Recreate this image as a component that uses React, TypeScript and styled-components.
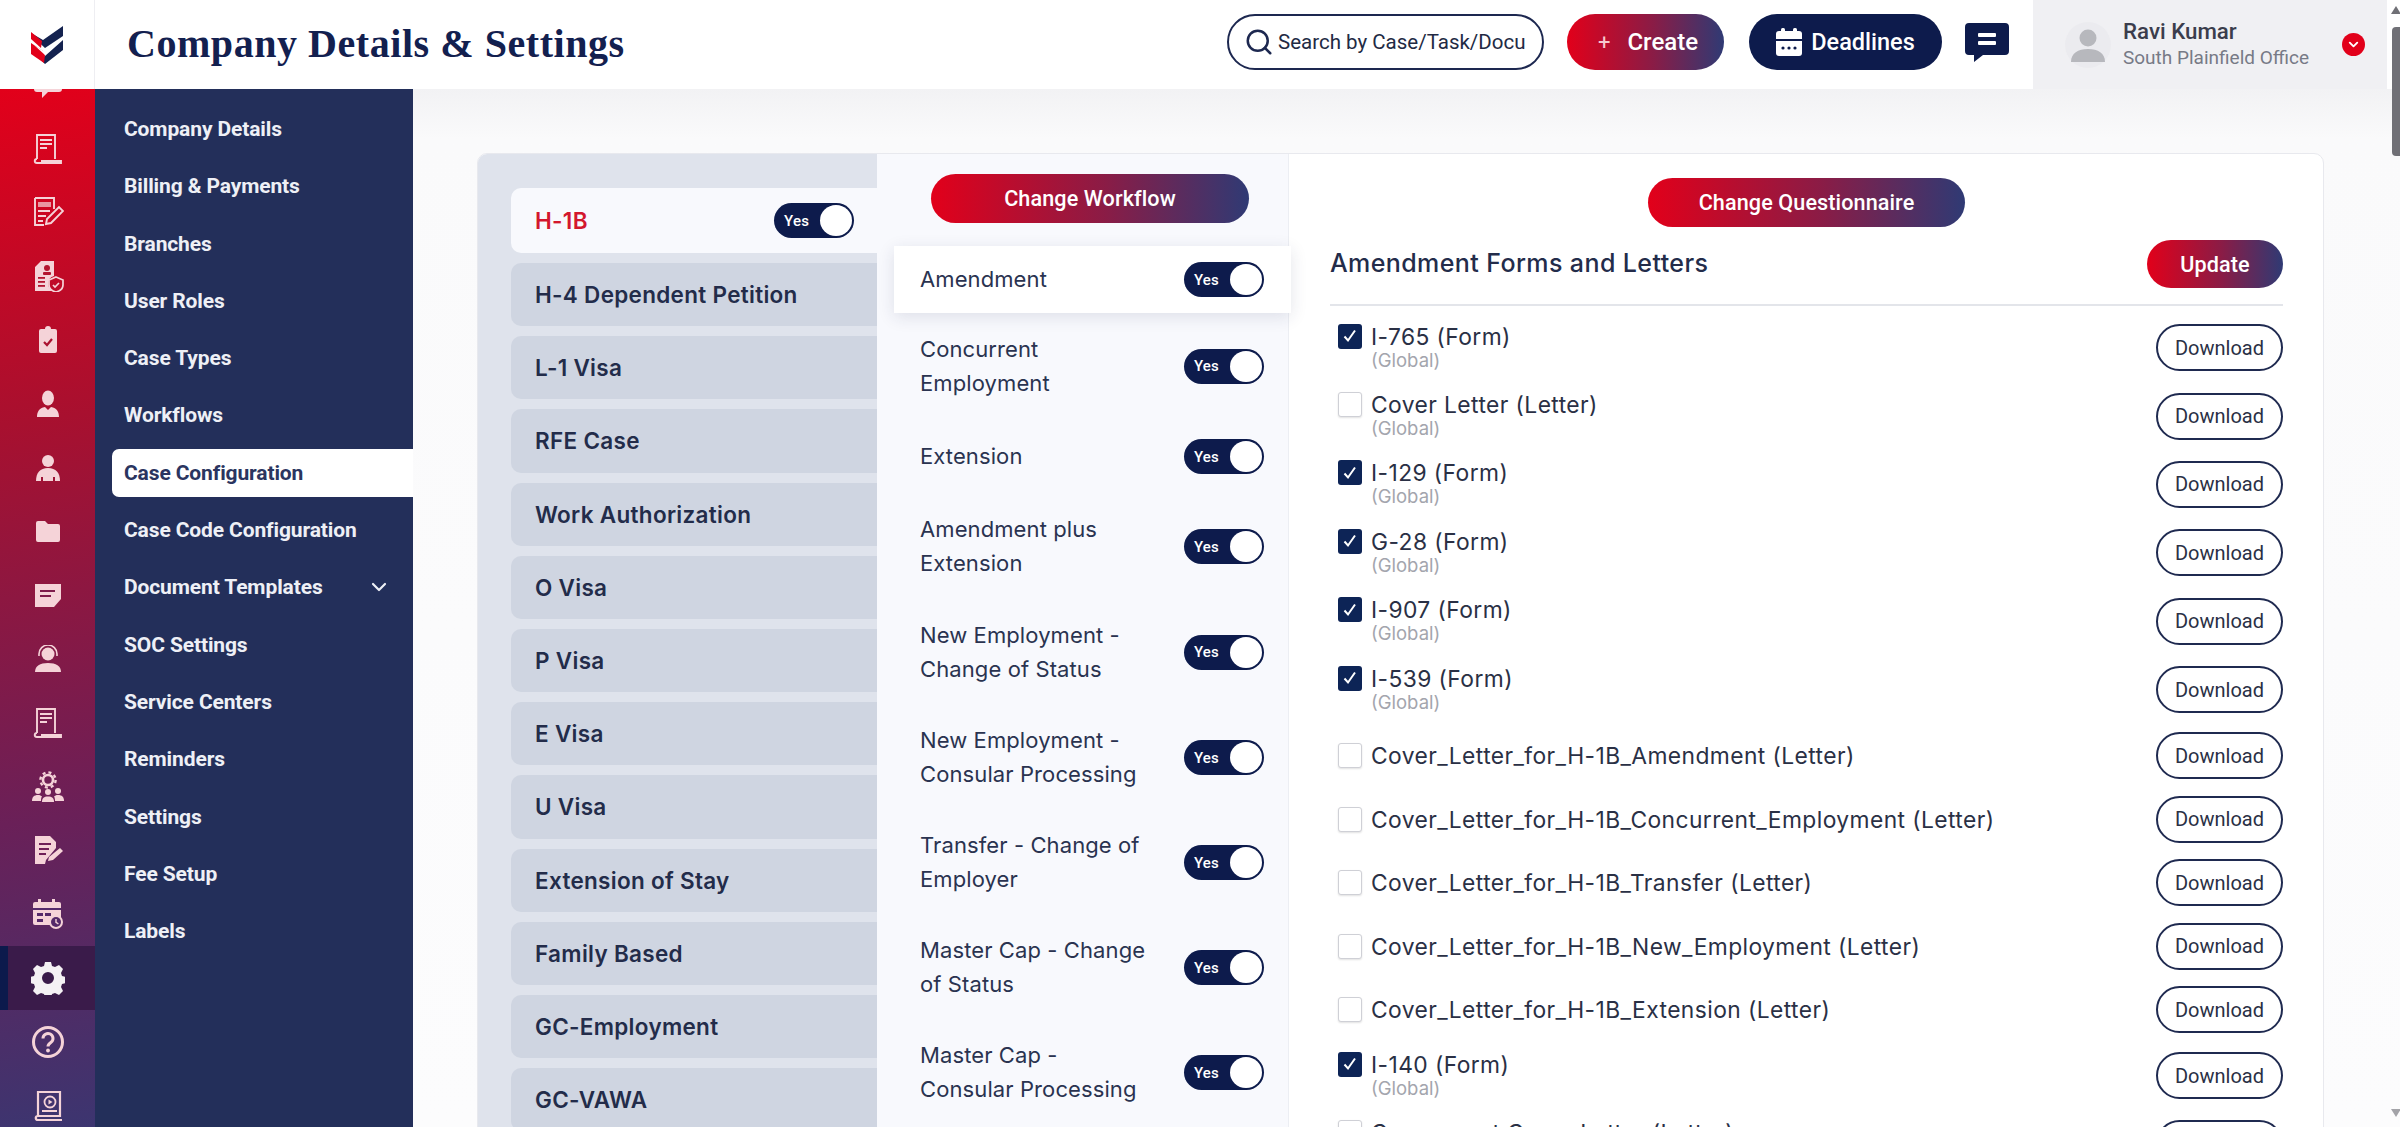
import React from "react";
import styled, { createGlobalStyle } from "styled-components";
import { Search, ChevronDown } from "lucide-react";

const Global = createGlobalStyle`
  html, body { margin: 0; padding: 0; overflow: hidden; background: #fff; }
  * { box-sizing: border-box; }
`;

const NAVY = "#0d1b4c";
const GRAD = "linear-gradient(90deg,#e2001a 0%,#8a1c46 55%,#2f3a74 100%)";
const BODY_FONT = `Inter, "Noto Sans", sans-serif`;
const UI_FONT = `Roboto, "Liberation Sans", sans-serif`;

const Page = styled.div`
  position: relative;
  width: 2400px;
  height: 1127px;
  overflow: hidden;
  display: flex;
  flex-direction: column;
  font-family: ${BODY_FONT};
`;
const Header = styled.header`
  height: 89px;
  flex: none;
  display: flex;
  align-items: center;
  background: #fff;
`;
const LogoCell = styled.div`
  width: 95px;
  height: 100%;
  flex: none;
  display: flex;
  align-items: center;
  justify-content: center;
  border-right: 1px solid #eeeef2;
`;
const Title = styled.h1`
  margin: 0 0 3px 32px;
  font: 700 40px "Liberation Serif", serif;
  letter-spacing: 0.55px;
  color: #13204f;
  white-space: nowrap;
`;
const Actions = styled.div`
  margin-left: auto;
  height: 100%;
  display: flex;
  align-items: center;
`;
const ActionGroup = styled.div`
  height: 100%;
  padding-bottom: 5px;
  display: flex;
  align-items: center;
`;
const SearchBox = styled.div`
  width: 317px;
  height: 56px;
  border: 2px solid #1d2850;
  border-radius: 28px;
  display: flex;
  align-items: center;
  gap: 4px;
  padding: 0 12px 0 15px;
  color: #1d2850;
  background: #fff;
`;
const SearchText = styled.span`
  font: 400 20.5px ${UI_FONT};
  white-space: nowrap;
  overflow: hidden;
  color: #222a44;
`;
const CreateButton = styled.button`
  width: 157px;
  height: 56px;
  margin-left: 23px;
  border: none;
  border-radius: 28px;
  background: ${GRAD};
  color: #fff;
  font: 500 24px ${UI_FONT};
  display: flex;
  align-items: center;
  justify-content: center;
  gap: 17px;
  padding-left: 11px;
`;
const PlusMark = styled.span`
  font: 400 22px ${UI_FONT};
  color: #f6c9cf;
`;
const DeadlineButton = styled.button`
  width: 193px;
  height: 56px;
  margin-left: 25px;
  border: none;
  border-radius: 28px;
  background: ${NAVY};
  color: #fff;
  font: 500 23.5px ${UI_FONT};
  display: flex;
  align-items: center;
  justify-content: center;
  gap: 9px;
`;
const ChatButton = styled.div`
  margin-left: 23px;
  width: 44px;
  height: 39px;
  flex: none;
`;
const UserPanel = styled.div`
  margin-left: 24px;
  margin-right: 13px;
  width: 354px;
  height: 100%;
  background: #f0f0f3;
  display: flex;
  align-items: center;
  padding-left: 32px;
`;
const Avatar = styled.div`
  width: 46px;
  height: 46px;
  border-radius: 50%;
  background: #ebebef;
  flex: none;
  display: flex;
  align-items: center;
  justify-content: center;
`;
const UserText = styled.div`
  margin: -3px 0 0 12px;
  display: flex;
  flex-direction: column;
  gap: 2px;
`;
const UserName = styled.div`
  font: 500 22.3px ${UI_FONT};
  color: #3b3d4c;
`;
const UserOffice = styled.div`
  font: 400 19px ${UI_FONT};
  color: #777a86;
`;
const RedDot = styled.div`
  margin-left: 33px;
  width: 23px;
  height: 23px;
  border-radius: 50%;
  background: #e2001a;
  color: #fff;
  display: flex;
  align-items: center;
  justify-content: center;
`;

const Body = styled.div`
  flex: 1;
  min-height: 0;
  display: flex;
`;
const Rail = styled.nav`
  width: 95px;
  flex: none;
  overflow: hidden;
  background: linear-gradient(172deg,#e2001a 0%,#a8102f 32%,#6a2058 70%,#3c3570 100%);
`;
const RailInner = styled.div`
  margin-top: -36px;
  display: flex;
  flex-direction: column;
`;
const RailRow = styled.div<{ $active?: boolean }>`
  height: 63.8px;
  flex: none;
  display: flex;
  align-items: center;
  justify-content: center;
  color: ${(p) => (p.$active ? "#f4f1f4" : "#f5d3d8")};
  background: ${(p) => (p.$active ? "#3a1b4a" : "transparent")};
  border-left: 8px solid ${(p) => (p.$active ? "#0c1a4c" : "transparent")};
  padding-right: 8px;
`;
const SideNav = styled.aside`
  width: 318px;
  flex: none;
  background: #232f5a;
  padding-top: 16px;
  display: flex;
  flex-direction: column;
`;
const NavItem = styled.div<{ $active?: boolean }>`
  height: 48px;
  margin-bottom: 9.3px;
  margin-left: 17px;
  padding: 0 22px 0 12px;
  display: flex;
  align-items: center;
  justify-content: space-between;
  border-radius: 7px 0 0 7px;
  font: 700 21px ${UI_FONT};
  letter-spacing: -0.12px;
  color: ${(p) => (p.$active ? "#2b3560" : "#eef0f6")};
  background: ${(p) => (p.$active ? "#fff" : "transparent")};
`;
const Main = styled.main`
  flex: 1;
  min-width: 0;
  padding: 64px 76px 0 64px;
  background: linear-gradient(180deg,#f2f2f4 0,#fafafb 50px,#fcfcfd 100%);
`;
const Card = styled.section`
  height: 1000px;
  display: flex;
  border: 1px solid #e8e9ee;
  border-radius: 10px;
  overflow: hidden;
  background: #fff;
`;
const VisaPane = styled.div`
  width: 399px;
  flex: none;
  background: #dfe3ec;
  padding: 34px 0 0 33px;
  display: flex;
  flex-direction: column;
  gap: 10px;
`;
const VisaItem = styled.div<{ $active?: boolean }>`
  height: ${(p) => (p.$active ? "65px" : "63.2px")};
  flex: none;
  display: flex;
  align-items: center;
  justify-content: space-between;
  padding: 0 23px 0 24px;
  border-radius: 10px 0 0 10px;
  background: ${(p) => (p.$active ? "#f8f9fd" : "#cfd5e1")};
  font: 600 22.5px ${BODY_FONT};
  letter-spacing: 0.3px;
  color: ${(p) => (p.$active ? "#d3172d" : "#232c4a")};
`;
const Toggle = styled.div`
  width: 80px;
  height: 35px;
  flex: none;
  border-radius: 18px;
  background: ${NAVY};
  display: flex;
  align-items: center;
  justify-content: space-between;
  padding: 0 2px 0 10px;
`;
const ToggleText = styled.span`
  font: 500 15px ${UI_FONT};
  color: #fff;
`;
const Knob = styled.span`
  width: 32px;
  height: 31px;
  border-radius: 50%;
  background: #fff;
`;
const WorkflowPane = styled.div`
  width: 412px;
  flex: none;
  background: #f8f9fd;
  border-right: 1px solid #eceef3;
  display: flex;
  flex-direction: column;
`;
const GradientButton = styled.button<{ $w: number; $h?: number }>`
  width: ${(p) => p.$w}px;
  height: ${(p) => p.$h ?? 49}px;
  flex: none;
  border: none;
  border-radius: 25px;
  background: ${GRAD};
  color: #fff;
  font: 500 21.6px ${UI_FONT};
  letter-spacing: 0.1px;
`;
const WorkflowButton = styled(GradientButton)`
  margin: 20px 0 0 54px;
`;
const WorkflowList = styled.div`
  margin-top: 23px;
  display: flex;
  flex-direction: column;
`;
const WorkflowRow = styled.div<{ $h: number; $active?: boolean }>`
  height: ${(p) => p.$h}px;
  flex: none;
  margin: 0 -3px 0 17px;
  padding: 0 27px 0 26px;
  display: flex;
  align-items: center;
  justify-content: space-between;
  background: ${(p) => (p.$active ? "#fff" : "transparent")};
  box-shadow: ${(p) => (p.$active ? "0 4px 16px rgba(30,40,80,.12)" : "none")};
  font: 400 22px/34px ${BODY_FONT};
  letter-spacing: 0.1px;
  color: #2a3350;
`;
const WorkflowLabel = styled.div`
  width: 236px;
  margin-top: -1px;
`;
const FormsPane = styled.div`
  flex: 1;
  min-width: 0;
  padding: 24px 40px 0 41px;
  display: flex;
  flex-direction: column;
`;
const QuestionButton = styled(GradientButton)`
  align-self: center;
`;
const FormsHead = styled.div`
  margin-top: 13px;
  padding-bottom: 16px;
  border-bottom: 2px solid #e3e5ea;
  display: flex;
  align-items: center;
  justify-content: space-between;
`;
const FormsTitle = styled.h2`
  margin: -2px 0 0;
  font: 500 25px ${BODY_FONT};
  letter-spacing: 0.4px;
  color: #232c4a;
`;
const FormList = styled.div`
  padding: 7.5px 0 0 8px;
  display: flex;
  flex-direction: column;
`;
const FormRow = styled.div<{ $single?: boolean }>`
  height: ${(p) => (p.$single ? "63.5px" : "68.4px")};
  flex: none;
  display: flex;
  align-items: center;
  justify-content: space-between;
`;
const FormInfo = styled.div`
  display: flex;
  align-items: flex-start;
  gap: 9px;
`;
const Check = styled.span<{ $on?: boolean }>`
  width: 24px;
  height: 25px;
  flex: none;
  border-radius: 3px;
  display: flex;
  align-items: center;
  justify-content: center;
  background: ${(p) => (p.$on ? "#0d2456" : "#fff")};
  border: ${(p) => (p.$on ? "none" : "1.5px solid #cfd0d6")};
  box-shadow: ${(p) => (p.$on ? "none" : "0 1px 2px rgba(0,0,0,.12)")};
`;
const FormName = styled.div`
  font: 400 22.8px/25px ${BODY_FONT};
  letter-spacing: 0.42px;
  color: #2a3045;
`;
const FormScope = styled.div`
  font: 400 18.5px/23px ${BODY_FONT};
  color: #a3a5ad;
`;
const DownloadButton = styled.button`
  width: 127px;
  height: 47px;
  flex: none;
  border: 2px solid #1f2a50;
  border-radius: 24px;
  background: #fff;
  color: #2a3045;
  font: 400 20px ${UI_FONT};
`;
const ScrollTrack = styled.div`
  position: absolute;
  top: 0;
  right: 0;
  width: 8px;
  height: 100%;
  display: flex;
  flex-direction: column;
  align-items: center;
`;
const ScrollThumb = styled.div`
  margin-top: 13px;
  width: 8px;
  height: 129px;
  border-radius: 4px 0 0 4px;
  background: #707076;
`;
const ScrollArrow = styled.div<{ $down?: boolean }>`
  margin-top: ${(p) => (p.$down ? "auto" : "6px")};
  margin-bottom: ${(p) => (p.$down ? "10px" : "0")};
  width: 0;
  height: 0;
  border-left: 5px solid transparent;
  border-right: 5px solid transparent;
  ${(p) => (p.$down ? "border-top: 8px solid #a3a3a8;" : "border-bottom: 8px solid #707076;")}
`;

const Logo = () => (
  <svg width="34" height="38" viewBox="0 0 34 38">
    <path d="M33 0 L33 10 L15 22 L1 9 L1 7 L13 14 Z" fill="#14224f" />
    <path d="M1 6 L12 15 L11 22 L1 13 Z" fill="#e2001a" />
    <path d="M33 14 L33 24 L15 38 L10 33 L15 30 Z" fill="#14224f" />
    <path d="M1 17 L13 25 L15 29 L14 37 L1 28 Z" fill="#e2001a" />
    <path d="M4 19 L15 26 L30 16 L15 29 Z" fill="#fff" />
  </svg>
);
const CalendarGlyph = () => (
  <svg width="26" height="28" viewBox="0 0 26 28">
    <path d="M3 3h20a3 3 0 0 1 3 3v5H0V6a3 3 0 0 1 3-3z" fill="#fff" />
    <rect x="5" y="0" width="4" height="7" rx="1.5" fill="#fff" />
    <rect x="17" y="0" width="4" height="7" rx="1.5" fill="#fff" />
    <path d="M0 13h26v12a3 3 0 0 1-3 3H3a3 3 0 0 1-3-3z" fill="#fff" />
    <circle cx="7" cy="20" r="1.6" fill={NAVY} />
    <circle cx="13" cy="20" r="1.6" fill={NAVY} />
    <circle cx="19" cy="20" r="1.6" fill={NAVY} />
  </svg>
);
const Ic = ({ w = 32, h = 32, children }: { w?: number; h?: number; children: React.ReactNode }) => (
  <svg width={w} height={h} viewBox={`0 0 ${w} ${h}`} fill="currentColor">{children}</svg>
);
const BookIcon = () => (
  <Ic>
    <path d="M5 26V2h18v24M5 26c-3 0-3 4 0 4h24v-2H9" fill="none" stroke="currentColor" strokeWidth="1.9" />
    <rect x="8" y="6" width="12" height="2" /><rect x="8" y="10" width="12" height="2" /><rect x="8" y="14" width="7" height="2" />
  </Ic>
);
const RAIL: React.ReactNode[] = [
  <Ic key="a"><path d="M2 2h28v18a3 3 0 0 1-3 3H16l-6 6v-6H5a3 3 0 0 1-3-3z" /></Ic>,
  <BookIcon key="b" />,
  <Ic key="c">
    <path d="M3 2h19v11M3 2v27h9" fill="none" stroke="currentColor" strokeWidth="1.9" />
    <rect x="6" y="6" width="13" height="5" opacity=".7" /><rect x="6" y="14" width="12" height="2" /><rect x="6" y="19" width="8" height="2" /><rect x="6" y="24" width="5" height="2" />
    <path d="M14 28l1-5 12-12 4 4-12 12z" fill="none" stroke="currentColor" strokeWidth="1.9" />
  </Ic>,
  <Ic key="d">
    <path d="M3 7l6-6h13v15a8 8 0 0 0-1 15H3z" />
    <path d="M24 17l7 3v5c0 4-3 6-7 7-4-1-7-3-7-7v-5z" fill="none" stroke="currentColor" strokeWidth="1.7" />
    <path d="M21 25l2 2 4-4" fill="none" stroke="currentColor" strokeWidth="1.7" />
    <circle cx="15" cy="8" r="3" fill="#b3142f" /><rect x="11" y="12" width="8" height="3" rx="1" fill="#b3142f" />
    <rect x="6" y="17" width="7" height="1.8" fill="#b3142f" /><rect x="6" y="21" width="7" height="1.8" fill="#b3142f" /><rect x="6" y="25" width="7" height="1.8" fill="#b3142f" />
  </Ic>,
  <Ic key="e" w={22} h={28}>
    <path d="M2 5a2 2 0 0 1 2-2h4a3 3 0 0 1 6 0h4a2 2 0 0 1 2 2v20a2 2 0 0 1-2 2H4a2 2 0 0 1-2-2z" />
    <path d="M7 16l3 3 5-6" fill="none" stroke="#ab1231" strokeWidth="2.2" />
  </Ic>,
  <Ic key="f" w={24} h={28}>
    <ellipse cx="12" cy="8" rx="6" ry="7.5" />
    <path d="M1 27c0-5 2-9 8-10l3 3 3-3c6 1 8 5 8 10z" />
  </Ic>,
  <Ic key="g" w={26} h={28}>
    <circle cx="13" cy="7" r="6" />
    <path d="M1 27c0-8 4-13 12-13s12 5 12 13h-5v-4h-2v4H8v-4H6v4z" />
  </Ic>,
  <Ic key="h" w={26} h={24}>
    <path d="M1 4a2 2 0 0 1 2-2h7l3 3h10a2 2 0 0 1 2 2v14a2 2 0 0 1-2 2H3a2 2 0 0 1-2-2z" />
  </Ic>,
  <Ic key="i" w={28} h={26}>
    <path d="M1 2h26v15l-7 8H1z" />
    <rect x="6" y="8" width="15" height="2" fill="#7e1c4c" /><rect x="6" y="13" width="11" height="2" fill="#7e1c4c" />
  </Ic>,
  <Ic key="j" w={28} h={28}>
    <circle cx="14" cy="9" r="6.5" />
    <path d="M5 11V9a9 9 0 0 1 18 0v2" fill="none" stroke="currentColor" strokeWidth="1.6" />
    <path d="M1 27c0-6 5-9 13-9s13 3 13 9z" />
  </Ic>,
  <BookIcon key="k" />,
  <Ic key="l">
    <circle cx="16" cy="9" r="5" fill="none" stroke="currentColor" strokeWidth="2.6" />
    <circle cx="16" cy="9" r="7.6" fill="none" stroke="currentColor" strokeWidth="2.4" strokeDasharray="3 3" />
    <circle cx="6" cy="20" r="3" /><circle cx="16" cy="21" r="3" /><circle cx="26" cy="20" r="3" />
    <path d="M0 30c0-4 2-6 6-6 2 0 3 .6 4 1.5-.8 1-1 2.5-1 4.5zM10 31c0-4 2-5.500 6-5.500s6 1.500 6 5.500zM23 30c0-2-.2-3.500-1-4.500 1-.9 2-1.500 4-1.500 4 0 6 2 6 6z" />
  </Ic>,
  <Ic key="m">
    <path d="M3 2h15l6 6v6L14 26l-1 4H3z" />
    <rect x="7" y="9" width="12" height="2" fill="#6f1f58" /><rect x="7" y="14" width="10" height="2" fill="#6f1f58" /><rect x="7" y="19" width="7" height="2" fill="#6f1f58" />
    <path d="M16 27l1-4 11-9 3 3-10 9z" />
  </Ic>,
  <Ic key="n">
    <rect x="1" y="4" width="28" height="23" rx="2" />
    <rect x="6" y="1" width="3" height="6" /><rect x="20" y="1" width="3" height="6" />
    <rect x="1" y="10" width="28" height="2" fill="#55296a" />
    <rect x="5" y="15" width="6" height="3" fill="#55296a" /><rect x="13" y="15" width="6" height="3" fill="#55296a" /><rect x="5" y="21" width="6" height="3" fill="#55296a" />
    <circle cx="24" cy="24" r="7" /><circle cx="24" cy="24" r="5" fill="#55296a" />
    <path d="M24 21v3.4l2.4 1.4" fill="none" stroke="currentColor" strokeWidth="1.4" />
  </Ic>,
  <Ic key="o" w={34} h={34}>
    <path fillRule="evenodd" d="M14 1h6l1 4 3 1 4-2 4 4-2 4 1 3 4 1v6l-4 1-1 3 2 4-4 4-4-2-3 1-1 4h-6l-1-4-3-1-4 2-4-4 2-4-1-3-4-1v-6l4-1 1-3-2-4 4-4 4 2 3-1zM17 11a6 6 0 1 0 0 12 6 6 0 0 0 0-12z" />
  </Ic>,
  <Ic key="p" w={34} h={34}>
    <circle cx="17" cy="17" r="14.5" fill="none" stroke="currentColor" strokeWidth="3" />
    <path d="M12 13.5a5 5 0 1 1 7.8 4.1c-1.8 1.2-2.8 2-2.8 4" fill="none" stroke="currentColor" strokeWidth="3" />
    <circle cx="17" cy="25.5" r="1.9" />
  </Ic>,
  <Ic key="q" w={30} h={32}>
    <path d="M5 26V2h22v24H5c-3 0-3 4 0 4h24" fill="none" stroke="currentColor" strokeWidth="2.2" />
    <circle cx="17" cy="12" r="5.5" fill="none" stroke="currentColor" strokeWidth="1.8" />
    <path d="M15.5 9.5l4 2.5-4 2.5z" />
    <rect x="9" y="20" width="15" height="2" />
  </Ic>,
];

const NAV = ["Company Details", "Billing & Payments", "Branches", "User Roles", "Case Types", "Workflows", "Case Configuration", "Case Code Configuration", "Document Templates", "SOC Settings", "Service Centers", "Reminders", "Settings", "Fee Setup", "Labels"];
const VISAS = ["H-1B", "H-4 Dependent Petition", "L-1 Visa", "RFE Case", "Work Authorization", "O Visa", "P Visa", "E Visa", "U Visa", "Extension of Stay", "Family Based", "GC-Employment", "GC-VAWA"];
const FLOWS: { label: string; h: number }[] = [
  { label: "Amendment", h: 67 },
  { label: "Concurrent Employment", h: 106 },
  { label: "Extension", h: 75 },
  { label: "Amendment plus Extension", h: 105 },
  { label: "New Employment - Change of Status", h: 106 },
  { label: "New Employment - Consular Processing", h: 105 },
  { label: "Transfer - Change of Employer", h: 105 },
  { label: "Master Cap - Change of Status", h: 105 },
  { label: "Master Cap - Consular Processing", h: 105 },
];
const FORMS: { name: string; on?: boolean; global?: boolean }[] = [
  { name: "I-765 (Form)", on: true, global: true },
  { name: "Cover Letter (Letter)", global: true },
  { name: "I-129 (Form)", on: true, global: true },
  { name: "G-28 (Form)", on: true, global: true },
  { name: "I-907 (Form)", on: true, global: true },
  { name: "I-539 (Form)", on: true, global: true },
  { name: "Cover_Letter_for_H-1B_Amendment (Letter)" },
  { name: "Cover_Letter_for_H-1B_Concurrent_Employment (Letter)" },
  { name: "Cover_Letter_for_H-1B_Transfer (Letter)" },
  { name: "Cover_Letter_for_H-1B_New_Employment (Letter)" },
  { name: "Cover_Letter_for_H-1B_Extension (Letter)" },
  { name: "I-140 (Form)", on: true, global: true },
  { name: "Component Cover Letter (Letter)", global: true },
];

const YesToggle = () => (
  <Toggle>
    <ToggleText>Yes</ToggleText>
    <Knob />
  </Toggle>
);

export default function App() {
  return (
    <Page>
      <Global />
      <Header>
        <LogoCell><Logo /></LogoCell>
        <Title>Company Details &amp; Settings</Title>
        <Actions>
          <ActionGroup>
            <SearchBox>
              <Search size={30} strokeWidth={2} />
              <SearchText>Search by Case/Task/Docu</SearchText>
            </SearchBox>
            <CreateButton><PlusMark>+</PlusMark>Create</CreateButton>
            <DeadlineButton><CalendarGlyph />Deadlines</DeadlineButton>
            <ChatButton>
              <svg width="44" height="39" viewBox="0 0 44 39">
                <path d="M4 0h36a4 4 0 0 1 4 4v24a4 4 0 0 1-4 4H18l-9 7v-7H4a4 4 0 0 1-4-4V4a4 4 0 0 1 4-4z" fill={NAVY} />
                <rect x="13" y="10" width="18" height="4" rx="1" fill="#fff" />
                <rect x="13" y="18" width="18" height="4" rx="1" fill="#fff" />
              </svg>
            </ChatButton>
          </ActionGroup>
          <UserPanel>
            <Avatar>
              <svg width="36" height="36" viewBox="0 0 36 36" fill="#b7b8bd">
                <circle cx="18" cy="11" r="8.5" />
                <path d="M1 35c0-9 7-13 17-13s17 4 17 13z" />
              </svg>
            </Avatar>
            <UserText>
              <UserName>Ravi Kumar</UserName>
              <UserOffice>South Plainfield Office</UserOffice>
            </UserText>
            <RedDot><ChevronDown size={15} strokeWidth={3} /></RedDot>
          </UserPanel>
        </Actions>
      </Header>
      <Body>
        <Rail>
          <RailInner>
            {RAIL.map((icon, i) => (
              <RailRow key={i} $active={i === 14}>{icon}</RailRow>
            ))}
          </RailInner>
        </Rail>
        <SideNav>
          {NAV.map((n) => (
            <NavItem key={n} $active={n === "Case Configuration"}>
              {n}
              {n === "Document Templates" && <ChevronDown size={24} strokeWidth={2.2} />}
            </NavItem>
          ))}
        </SideNav>
        <Main>
          <Card>
            <VisaPane>
              {VISAS.map((v, i) => (
                <VisaItem key={v} $active={i === 0}>
                  {v}
                  {i === 0 && <YesToggle />}
                </VisaItem>
              ))}
            </VisaPane>
            <WorkflowPane>
              <WorkflowButton $w={318}>Change Workflow</WorkflowButton>
              <WorkflowList>
                {FLOWS.map((f, i) => (
                  <WorkflowRow key={f.label} $h={f.h} $active={i === 0}>
                    <WorkflowLabel>{f.label}</WorkflowLabel>
                    <YesToggle />
                  </WorkflowRow>
                ))}
              </WorkflowList>
            </WorkflowPane>
            <FormsPane>
              <QuestionButton $w={317}>Change Questionnaire</QuestionButton>
              <FormsHead>
                <FormsTitle>Amendment Forms and Letters</FormsTitle>
                <GradientButton $w={136} $h={48}>Update</GradientButton>
              </FormsHead>
              <FormList>
                {FORMS.map((f) => (
                  <FormRow key={f.name} $single={!f.global}>
                    <FormInfo>
                      <Check $on={f.on}>
                        {f.on && (
                          <svg width="16" height="16" viewBox="0 0 16 16">
                            <path d="M2.5 8.500l3.500 4 7-10" fill="none" stroke="#fff" strokeWidth="2" />
                          </svg>
                        )}
                      </Check>
                      <div>
                        <FormName>{f.name}</FormName>
                        {f.global && <FormScope>(Global)</FormScope>}
                      </div>
                    </FormInfo>
                    <DownloadButton>Download</DownloadButton>
                  </FormRow>
                ))}
              </FormList>
            </FormsPane>
          </Card>
        </Main>
      </Body>
      <ScrollTrack>
        <ScrollArrow />
        <ScrollThumb />
        <ScrollArrow $down />
      </ScrollTrack>
    </Page>
  );
}
